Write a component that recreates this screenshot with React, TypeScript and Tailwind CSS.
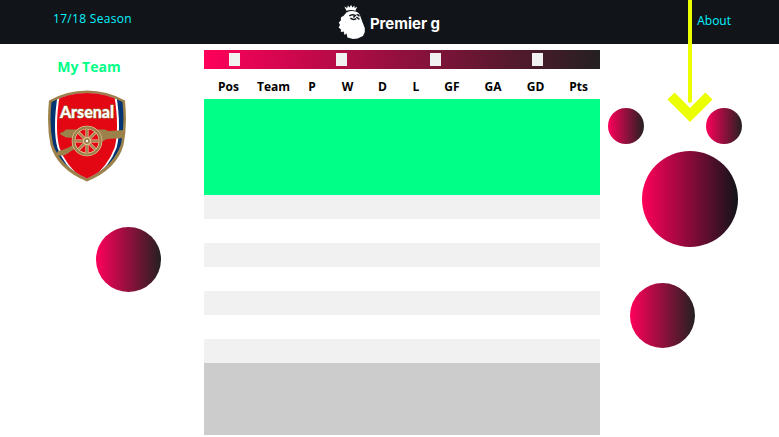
const columns = [
  { label: "Pos", width: "w-[49px]" },
  { label: "Team", width: "w-[41px]" },
  { label: "P", width: "w-[36px]" },
  { label: "W", width: "w-[35px]" },
  { label: "D", width: "w-[35px]" },
  { label: "L", width: "w-[32px]" },
  { label: "GF", width: "w-[40px]" },
  { label: "GA", width: "w-[42px]" },
  { label: "GD", width: "w-[43px]" },
  { label: "Pts", width: "w-[43px]" },
];

const TEAMS_SHOWN = 14;

function rowColour(position: number): string {
  if (position <= 4) return "bg-[#00ff87]";
  if (position > 11) return "bg-[#cccccc]";
  return position % 2 === 1 ? "bg-[#f1f1f1]" : "bg-white";
}

function LionMark() {
  return (
    <svg viewBox="0 0 28 36" className="h-9 w-7" fill="#fff" aria-hidden="true">
      <path d="M8.4 6.8 L6.4 2.6 L9.2 4 L9.8 1.4 L11.6 3.4 L13 .8 L14.4 3.4 L16.4 1.4 L16.6 4 L19.2 2.8 L17.4 6.8 Q13 5.4 8.4 6.8 Z" />
      <path d="M8.4 8.4 Q13 6.2 17.6 7.6 Q21.6 9 22.6 13 L24.4 18 L26.8 24 L26.8 28 L25 32 L19.6 34.6 L15 35 L9.4 33.4 L8.6 29.6 L6.6 31 L5.6 27.6 L2.8 28 L3 25.4 L.6 23.6 L2 21 L.8 18.6 L2.8 16.6 L3 13.2 L5.4 12 Z" />
      <path d="M11.4 12 Q13.6 9.8 17.2 11.4 L15.4 13.4 M12.4 14.2 Q15.4 16.4 18.2 14.6 M18.6 10.8 Q20.4 10.2 21.4 12.4 M18.4 13 L21.4 15.4" fill="none" stroke="#111419" strokeWidth="1.5" />
    </svg>
  );
}

function ArsenalCrest() {
  const spokes = [0, 45, 90, 135];
  return (
    <svg viewBox="0 0 78 92" className="h-[92px] w-[78px]" role="img" aria-label="Arsenal">
      <defs>
        <clipPath id="shield">
          <path d="M3.5 12 Q20 3 39 3 Q58 3 74.5 12 Q77 36 73 54 Q66 76 39 88.5 Q12 76 5 54 Q1 36 3.5 12 Z" />
        </clipPath>
      </defs>
      <path d="M1 10.5 Q19 .5 39 .5 Q59 .5 77 10.5 Q79.5 36 75.5 55 Q69 79 39 91.5 Q9 79 2.5 55 Q-1.5 36 1 10.5 Z" fill="#9c824a" />
      <g clipPath="url(#shield)">
        <rect width="78" height="92" fill="#023474" />
        <path d="M10.5 0 Q4 38 9.5 58 Q17 78 37 92 H41 Q61 78 68.5 58 Q74 38 67.5 0 Z" fill="#fff" />
        <path d="M12.5 0 Q6 38 11.5 58 Q19 78 39 92 Q59 78 66.5 58 Q72 38 65.5 0 Z" fill="#e30613" />
      </g>
      <path d="M12.5 42.5 L15 42 L18 39.5 L57 39.5 L60 41 L76.5 40 L76 48 L59 49 L53 52 L40 54 Q26 58 19 64 Q14 67 8 65 L10 61 Q20 59 30 52 L27 48 L18 47.5 L12.5 44.5 Z" fill="#9c824a" />
      <circle cx="39" cy="51" r="15" fill="#e30613" />
      <circle cx="39" cy="51" r="13.5" fill="none" stroke="#f0d9b0" strokeWidth="3.6" />
      <circle cx="39" cy="51" r="13.5" fill="none" stroke="#9c824a" strokeWidth="2.4" />
      {spokes.map((angle) => (
        <g key={angle} transform={`rotate(${angle} 39 51)`}>
          <path d="M27 51 H51" stroke="#f0d9b0" strokeWidth="3" />
          <path d="M27 51 H51" stroke="#9c824a" strokeWidth="1.8" />
        </g>
      ))}
      <circle cx="39" cy="51" r="3.6" fill="#9c824a" stroke="#f0d9b0" strokeWidth=".8" />
      <circle cx="39" cy="51" r="1.2" fill="#fff" />
      <text
        x="39"
        y="28"
        textAnchor="middle"
        fontFamily="Lato, sans-serif"
        fontWeight="900"
        fontSize="16"
        fill="#fff"
        stroke="#9c824a"
        strokeWidth="1.2"
        paintOrder="stroke"
      >
        Arsenal
      </text>
    </svg>
  );
}

function DownArrow() {
  return (
    <svg
      viewBox="0 0 46 123"
      className="pointer-events-none absolute top-0 left-1/2 h-[123px] w-[46px] -translate-x-1/2"
      fill="none"
      stroke="#ebff00"
      aria-hidden="true"
    >
      <path d="M23 0 V101" strokeWidth="4" strokeLinecap="round" />
      <path d="M4 96 L23 115 L42 96" strokeWidth="10" />
    </svg>
  );
}

export default function App() {
  return (
    <div className="relative min-h-screen bg-white font-['Open_Sans','Noto_Sans',sans-serif]">
      <header className="grid h-11 grid-cols-[204fr_396fr_179fr] bg-[#111419]">
        <div className="pt-[9px] pl-[53px] text-xs leading-5 tracking-wide text-[#04f5ff]">17/18 Season</div>
        <div className="flex items-center justify-center gap-1 pr-[26px] text-white">
          <LionMark />
          <span className="pt-1 font-['Inter',sans-serif] text-[15px] leading-5 font-bold">Premier g</span>
        </div>
        <nav className="relative z-10 flex justify-end">
          <a href="#about" className="pt-[11px] pr-12 text-xs leading-5 text-[#04f5ff]">About</a>
          <DownArrow />
        </nav>
      </header>

      <main className="grid grid-cols-[204fr_396fr_179fr]">
        <aside className="flex flex-col items-start">
          <div className="flex flex-col items-center gap-3 pt-3 pl-12">
            <h2 className="pl-1 text-sm leading-[22px] font-bold text-[#00ff87]">My Team</h2>
            <ArsenalCrest />
          </div>
          <div className="mt-[45px] ml-24 size-[65px] rounded-full bg-linear-to-r/srgb from-[#ff005a] to-[#242021]" />
        </aside>

        <section className="pt-1.5">
          <div className="grid h-[19px] grid-cols-[107fr_94fr_102fr_68fr] items-center bg-linear-to-r/srgb from-[#ff005a] to-[#242021] pl-[25px]">
            <button type="button" aria-label="All matches" className="h-[13px] w-[11px] bg-[#f1f1f1]" />
            <button type="button" aria-label="Home" className="h-[13px] w-[11px] bg-[#f1f1f1]" />
            <button type="button" aria-label="Away" className="h-[13px] w-[11px] bg-[#f1f1f1]" />
            <button type="button" aria-label="Form" className="h-[13px] w-[11px] bg-[#f1f1f1]" />
          </div>
          <table className="mt-1.5 w-full table-fixed border-collapse">
            <colgroup>
              {columns.map((column) => (
                <col key={column.label} className={column.width} />
              ))}
            </colgroup>
            <thead>
              <tr className="h-6">
                {columns.map((column) => (
                  <th key={column.label} scope="col" className="p-0 text-xs leading-5 font-bold text-black">
                    {column.label}
                  </th>
                ))}
              </tr>
            </thead>
            <tbody>
              {Array.from({ length: TEAMS_SHOWN }, (_, index) => (
                <tr key={index} className={rowColour(index + 1)}>
                  {columns.map((column) => (
                    <td key={column.label} className="h-6 p-0" />
                  ))}
                </tr>
              ))}
            </tbody>
          </table>
        </section>

        <aside className="flex flex-col items-center pt-16" aria-hidden="true">
          <div className="flex w-full justify-between pr-[37px] pl-2">
            <div className="size-9 rounded-full bg-linear-to-r/srgb from-[#ff005a] to-[#242021]" />
            <div className="size-9 rounded-full bg-linear-to-r/srgb from-[#ff005a] to-[#242021]" />
          </div>
          <div className="mt-[7px] size-24 rounded-full bg-linear-to-r/srgb from-[#ff005a] to-[#111419]" />
          <div className="mt-9 mr-[54px] size-[65px] rounded-full bg-linear-to-r/srgb from-[#ff005a] to-[#242021]" />
        </aside>
      </main>
    </div>
  );
}
